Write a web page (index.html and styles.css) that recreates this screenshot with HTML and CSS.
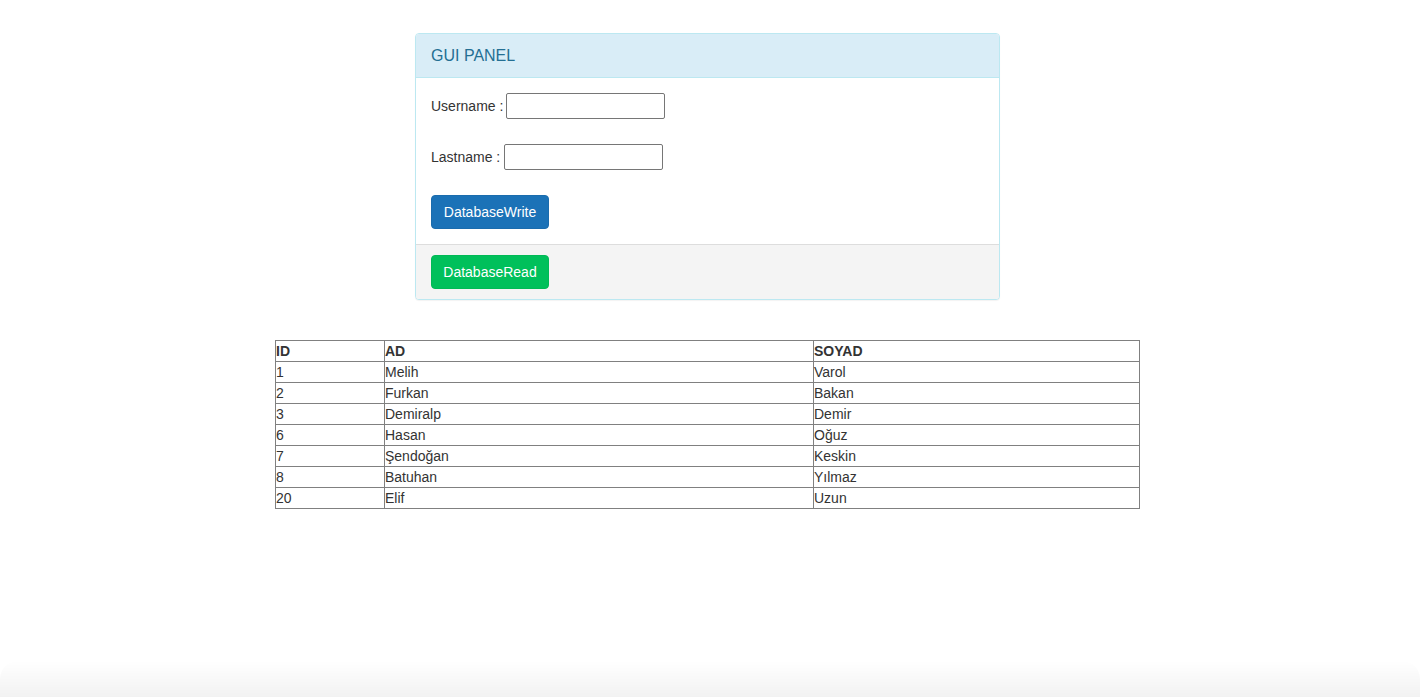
FILE: index.html
```html
<!DOCTYPE html>
<html lang="tr">
<head>
<meta charset="utf-8">
<title>GUI PANEL</title>
<link rel="stylesheet" href="styles.css">
</head>
<body>
<div class="page">
  <div class="panel">
    <div class="panel-heading">GUI PANEL</div>
    <div class="panel-body">
      <div class="field"><label>Username : </label><input type="text" class="text-input tight"></div>
      <div class="field"><label>Lastname : </label><input type="text" class="text-input"></div>
      <div class="field"><button class="btn btn-primary">DatabaseWrite</button></div>
    </div>
    <div class="panel-footer">
      <button class="btn btn-success">DatabaseRead</button>
    </div>
  </div>

  <table class="data-table">
    <thead>
      <tr><th class="col-id">ID</th><th class="col-ad">AD</th><th class="col-soyad">SOYAD</th></tr>
    </thead>
    <tbody>
      <tr><td>1</td><td>Melih</td><td>Varol</td></tr>
      <tr><td>2</td><td>Furkan</td><td>Bakan</td></tr>
      <tr><td>3</td><td>Demiralp</td><td>Demir</td></tr>
      <tr><td>6</td><td>Hasan</td><td>Oğuz</td></tr>
      <tr><td>7</td><td>Şendoğan</td><td>Keskin</td></tr>
      <tr><td>8</td><td>Batuhan</td><td>Yılmaz</td></tr>
      <tr><td>20</td><td>Elif</td><td>Uzun</td></tr>
    </tbody>
  </table>
</div>
<div class="bottom-shade"></div>
</body>
</html>
```
FILE: styles.css
```css
* { box-sizing: border-box; }

html, body {
  margin: 0;
  padding: 0;
  background: #ffffff;
}

body {
  font-family: "Liberation Sans", Arial, Helvetica, sans-serif;
  font-size: 14px;
  line-height: 20px;
  color: #333333;
}

.page {
  width: 1415px;
  padding-top: 33px;
  display: flex;
  flex-direction: column;
  align-items: center;
}

.panel {
  width: 585px;
  border: 1px solid #bce8f1;
  border-radius: 4px;
  background: #ffffff;
  box-shadow: 0 1px 1px rgba(0, 0, 0, 0.05);
  overflow: hidden;
}

.panel-heading {
  height: 44px;
  padding: 0 15px;
  display: flex;
  align-items: center;
  background: #d9edf7;
  border-bottom: 1px solid #bce8f1;
  color: #246f93;
  font-size: 16px;
}

.panel-body {
  padding: 15px;
  display: flex;
  flex-direction: column;
  gap: 25px;
}

.field {
  display: flex;
  align-items: center;
  height: 26px;
}

.field label {
  white-space: pre;
}

.field:last-child {
  height: 34px;
}

.text-input {
  width: 159px;
  height: 26px;
  margin: 0;
  padding: 1px 4px;
  border: 1px solid #767676;
  border-radius: 2px;
  font-family: inherit;
  font-size: 13px;
  background: #ffffff;
}

.text-input.tight {
  margin-left: -1px;
}

.btn {
  width: 118px;
  height: 34px;
  padding: 6px 0;
  border: 1px solid transparent;
  border-radius: 4px;
  font-family: inherit;
  font-size: 14px;
  line-height: 20px;
  color: #ffffff;
  text-align: center;
  cursor: pointer;
}

.btn-primary {
  background: #1b72b7;
  border-color: #1a6cad;
}

.btn-success {
  background: #00c05b;
  border-color: #00b956;
}

.panel-footer {
  padding: 10px 15px;
  background: #f4f4f4;
  border-top: 1px solid #dddddd;
}

.data-table {
  margin-top: 40px;
  width: 864px;
  border-collapse: collapse;
  table-layout: fixed;
  font-size: 14px;
  line-height: 20px;
}

.data-table th,
.data-table td {
  border: 1px solid #808080;
  padding: 0;
  text-align: left;
  color: #333333;
}

.data-table th {
  font-weight: bold;
}

.col-id { width: 109px; }
.col-ad { width: 429px; }
.col-soyad { width: 326px; }

.bottom-shade {
  position: fixed;
  left: 0;
  right: 0;
  bottom: 0;
  height: 36px;
  border-radius: 18px 18px 0 0;
  background: linear-gradient(to bottom, rgba(0, 0, 0, 0), rgba(0, 0, 0, 0.05));
  pointer-events: none;
}
```
